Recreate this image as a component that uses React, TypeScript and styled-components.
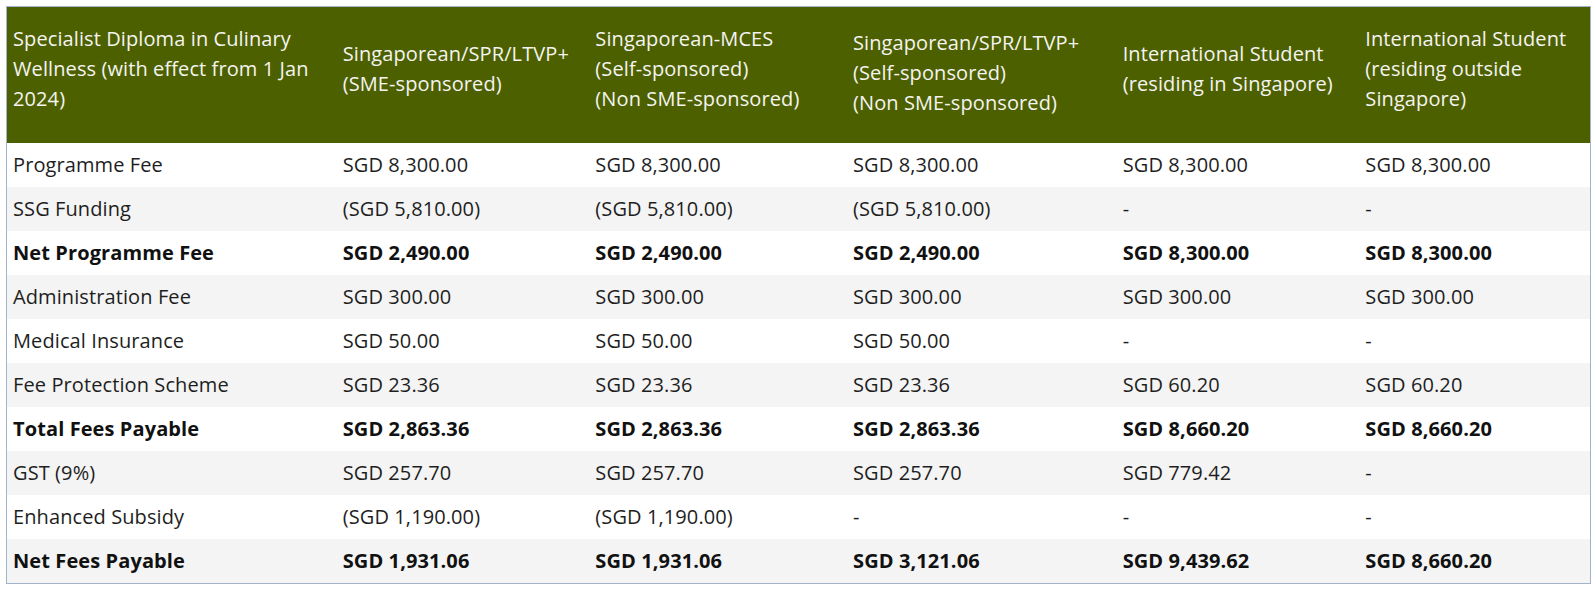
import React from 'react';
import styled, { createGlobalStyle } from 'styled-components';

const GlobalStyle = createGlobalStyle`
  body {
    margin: 0;
    background: #ffffff;
    font-family: "Open Sans", "Liberation Sans", sans-serif;
  }
`;

const Page = styled.div`
  padding: 6px;
`;

const FeeTable = styled.table`
  width: 1585px;
  border-collapse: collapse;
  table-layout: fixed;
  border: 1px solid #a2b3cb;
  font-size: 20px;
  line-height: 30px;
  letter-spacing: 0.1px;
  color: #1e1e1e;
`;

const HeadRow = styled.tr`
  background: #4d6000;
  height: 136px;
`;

const HeadCell = styled.th<{ $nudge?: boolean }>`
  text-align: left;
  font-weight: 400;
  color: #f4f4f0;
  vertical-align: middle;
  padding: ${({ $nudge }) => ($nudge ? '9px 6px 12px 6px' : '0 6px 12px 6px')};
`;

const BodyRow = styled.tr<{ $shaded: boolean }>`
  background: ${({ $shaded }) => ($shaded ? '#f4f4f4' : '#ffffff')};
  height: 44.1px;
`;

const Cell = styled.td<{ $bold: boolean }>`
  padding: 7px 6px;
  font-weight: ${({ $bold }) => ($bold ? 700 : 400)};
  color: ${({ $bold }) => ($bold ? '#111111' : '#1e1e1e')};
  white-space: nowrap;
`;

const widths = [330, 252.5, 257.5, 269.5, 242.5, 231];

const headers: { lines: string[]; nudge?: boolean }[] = [
  { lines: ['Specialist Diploma in Culinary', 'Wellness (with effect from 1 Jan', '2024)'] },
  { lines: ['Singaporean/SPR/LTVP+', '(SME-sponsored)'] },
  { lines: ['Singaporean-MCES', '(Self-sponsored)', '(Non SME-sponsored)'] },
  { lines: ['Singaporean/SPR/LTVP+', '(Self-sponsored)', '(Non SME-sponsored)'], nudge: true },
  { lines: ['International Student', '(residing in Singapore)'] },
  { lines: ['International Student', '(residing outside', 'Singapore)'] },
];

const rows: { label: string; bold?: boolean; values: string[] }[] = [
  { label: 'Programme Fee', values: ['SGD 8,300.00', 'SGD 8,300.00', 'SGD 8,300.00', 'SGD 8,300.00', 'SGD 8,300.00'] },
  { label: 'SSG Funding', values: ['(SGD 5,810.00)', '(SGD 5,810.00)', '(SGD 5,810.00)', '-', '-'] },
  { label: 'Net Programme Fee', bold: true, values: ['SGD 2,490.00', 'SGD 2,490.00', 'SGD 2,490.00', 'SGD 8,300.00', 'SGD 8,300.00'] },
  { label: 'Administration Fee', values: ['SGD 300.00', 'SGD 300.00', 'SGD 300.00', 'SGD 300.00', 'SGD 300.00'] },
  { label: 'Medical Insurance', values: ['SGD 50.00', 'SGD 50.00', 'SGD 50.00', '-', '-'] },
  { label: 'Fee Protection Scheme', values: ['SGD 23.36', 'SGD 23.36', 'SGD 23.36', 'SGD 60.20', 'SGD 60.20'] },
  { label: 'Total Fees Payable', bold: true, values: ['SGD 2,863.36', 'SGD 2,863.36', 'SGD 2,863.36', 'SGD 8,660.20', 'SGD 8,660.20'] },
  { label: 'GST (9%)', values: ['SGD 257.70', 'SGD 257.70', 'SGD 257.70', 'SGD 779.42', '-'] },
  { label: 'Enhanced Subsidy', values: ['(SGD 1,190.00)', '(SGD 1,190.00)', '-', '-', '-'] },
  { label: 'Net Fees Payable', bold: true, values: ['SGD 1,931.06', 'SGD 1,931.06', 'SGD 3,121.06', 'SGD 9,439.62', 'SGD 8,660.20'] },
];

const App: React.FC = () => {
  return (
    <Page>
      <GlobalStyle />
      <FeeTable>
        <colgroup>
          {widths.map((w, i) => (
            <col key={i} style={{ width: `${w}px` }} />
          ))}
        </colgroup>
        <thead>
          <HeadRow>
            {headers.map((h, i) => (
              <HeadCell key={i} $nudge={h.nudge}>
                {h.lines.map((line, j) => (
                  <React.Fragment key={j}>
                    {line}
                    {j < h.lines.length - 1 && <br />}
                  </React.Fragment>
                ))}
              </HeadCell>
            ))}
          </HeadRow>
        </thead>
        <tbody>
          {rows.map((row, i) => (
            <BodyRow key={row.label} $shaded={i % 2 === 1}>
              <Cell $bold={!!row.bold}>{row.label}</Cell>
              {row.values.map((v, j) => (
                <Cell key={j} $bold={!!row.bold}>{v}</Cell>
              ))}
            </BodyRow>
          ))}
        </tbody>
      </FeeTable>
    </Page>
  );
};

export default App;
